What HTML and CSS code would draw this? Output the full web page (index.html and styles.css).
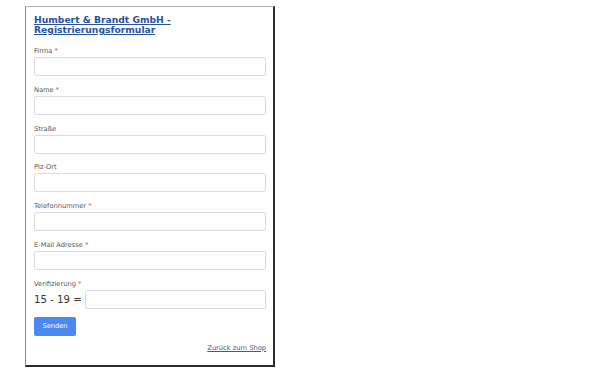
FILE: index.html
```html
<!doctype html>
<html lang="de">
  <head>
    <meta charset="UTF-8" />
    <title>Registrierungsformular</title>
    <link rel="stylesheet" href="styles.css">
  </head>
  <body>
    <div class="form-box">
      <h1 class="form-title"><a href="#">Humbert &amp; Brandt GmbH - Registrierungsformular</a></h1>

      <form class="reg-form">
        <div class="field">
          <label>Firma <span class="req">*</span></label>
          <input type="text" />
        </div>
        <div class="field">
          <label>Name <span class="req">*</span></label>
          <input type="text" />
        </div>
        <div class="field">
          <label>Straße</label>
          <input type="text" />
        </div>
        <div class="field">
          <label>Plz-Ort</label>
          <input type="text" />
        </div>
        <div class="field">
          <label>Telefonnummer <span class="req">*</span></label>
          <input type="text" />
        </div>
        <div class="field">
          <label>E-Mail Adresse <span class="req">*</span></label>
          <input type="text" />
        </div>
        <div class="field field-last">
          <label>Verifizierung <span class="req">*</span></label>
          <div class="captcha">
            <span class="captcha-q">15 - 19 =</span>
            <input type="text" />
          </div>
        </div>
        <button type="submit">Senden</button>
      </form>

      <div class="back">
        <a href="#">Zurück zum Shop</a>
      </div>
    </div>
  </body>
</html>
```

FILE: styles.css
```css
* {
  margin: 0;
  padding: 0;
  box-sizing: border-box;
  font-family: "DejaVu Sans", Verdana, sans-serif;
}

body {
  background-color: white;
  padding: 6px 25px;
}

.form-box {
  width: 250px;
  height: 361px;
  padding: 8px 7px 0 8px;
  border-top: 1px solid #b4b4b4;
  border-left: 1px solid #8a8a8a;
  border-right: 2px solid #2b2b2b;
  border-bottom: 2px solid #2b2b2b;
}

.form-title {
  font-size: 9.2px;
  line-height: 10px;
  font-weight: bold;
  margin-bottom: 12px;
}

.form-title a {
  color: #2852a0;
}

.field {
  margin-bottom: 9.8px;
}

.field-last {
  margin-bottom: 8px;
}

.field label {
  display: block;
  font-size: 6.7px;
  color: #555;
  margin-bottom: 2px;
  line-height: 8px;
}

.req {
  color: #d04040;
}

.field input {
  display: block;
  width: 100%;
  height: 19px;
  border: 1px solid #dcdcdc;
  border-radius: 2px;
}

.captcha {
  display: flex;
  align-items: center;
  gap: 3px;
}

.captcha-q {
  font-size: 10.2px;
  color: #333;
  white-space: nowrap;
}

.captcha input {
  flex: 1;
}

button {
  display: block;
  width: 42px;
  height: 19px;
  background-color: #4a8af0;
  color: white;
  border: none;
  border-radius: 2px;
  font-size: 6.7px;
}

.back {
  text-align: right;
  margin-top: 8px;
  font-size: 6.7px;
}

.back a {
  color: #3a5aa0;
}
```
